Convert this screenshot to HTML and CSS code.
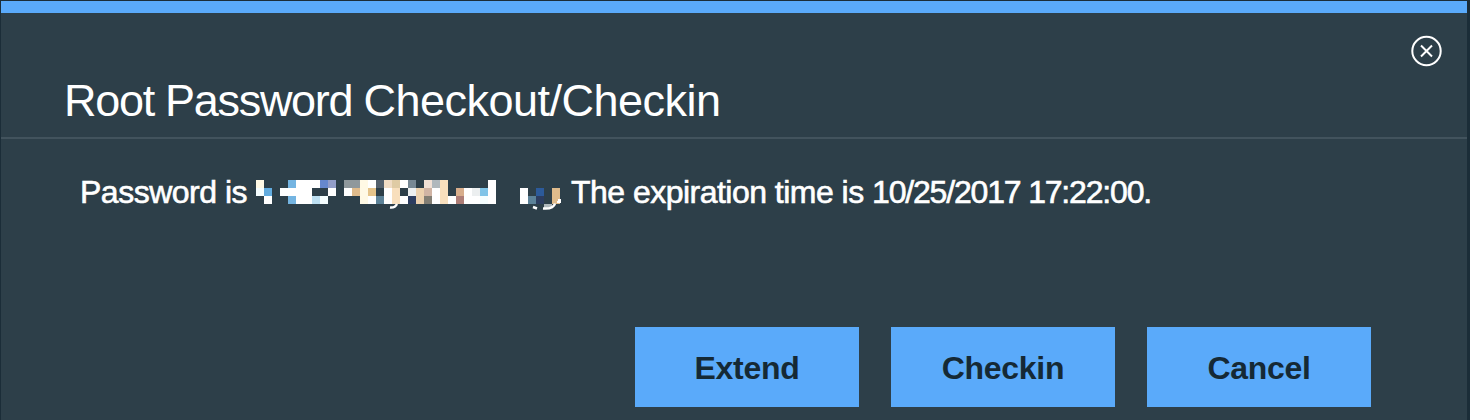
FILE: index.html
```
<!DOCTYPE html>
<html lang="en">
<head>
<meta charset="utf-8">
<title>Root Password Checkout/Checkin</title>
<link rel="stylesheet" href="styles.css">
</head>
<body>
<main class="dialog">
  <header class="header">
    <h1 class="title">Root Password <span class="operation">Checkout/Checkin</span></h1>
    <button class="close" aria-label="Close">
      <svg width="32" height="32" viewBox="0 0 32 32" fill="none" stroke="#fff" stroke-width="2"><circle cx="16.5" cy="16" r="14.2"/><path d="M11 10.500l11 11M22 10.500l-11 11"/></svg>
    </button>
  </header>
  <p class="message">
    <span class="label">Password is</span>
    <svg class="mask" width="308" height="32" viewBox="256 180 308 32" shape-rendering="crispEdges">
      <path fill="#fff" d="M296 180h24v8h-24zM280 188h32v8h-32zM328 188h8v8h-8zM264 196h8v8h-8zM296 196h16v8h-16zM344 188h8v8h-8zM368 180h8v8h-8zM400 180h8v8h-8zM488 180h8v24h-8zM384 188h8v16h-8zM432 188h8v16h-8zM464 188h8v16h-8zM368 196h8v8h-8zM400 196h8v8h-8zM448 196h8v8h-8zM472 196h8v8h-8zM520 188h8v16h-8z"/>
      <path fill="#fff9e5" d="M256 180h8v8h-8zM360 180h8v24h-8z"/>
      <path fill="#f5feff" d="M256 188h8v8h-8zM320 196h8v8h-8zM480 196h8v8h-8z"/>
      <path fill="#62acdf" d="M264 188h8v8h-8z"/>
      <path fill="#74b4e1" d="M288 180h8v8h-8zM288 196h8v8h-8z"/>
      <path fill="#bde0f2" d="M312 196h8v8h-8z"/>
      <path fill="#6688ce" d="M320 180h8v8h-8z"/>
      <path fill="#929dc8" d="M328 180h8v8h-8z"/>
      <path fill="#8f989c" d="M344 180h16v8h-16z"/>
      <path fill="#dfbb8c" d="M352 188h8v8h-8zM552 188h8v16h-8z"/>
      <path fill="#e5c48b" d="M368 188h8v8h-8z"/>
      <path fill="#53606c" d="M376 180h8v8h-8z"/>
      <path fill="#5c8298" d="M376 196h8v8h-8zM528 196h8v8h-8z"/>
      <path fill="#f0dcc4" d="M384 180h8v8h-8z"/>
      <path fill="#dfcba4" d="M392 180h8v8h-8z"/>
      <path fill="#f8dfbd" d="M392 188h8v16h-8zM440 180h8v24h-8z"/>
      <path fill="#778894" d="M408 180h8v8h-8z"/>
      <path fill="#eceff0" d="M408 188h8v8h-8zM472 188h8v8h-8z"/>
      <path fill="#2c3d60" d="M408 196h8v8h-8zM536 196h8v8h-8z"/>
      <path fill="#ecd1ae" d="M416 188h8v16h-8z"/>
      <path fill="#f0e0d4" d="M424 180h8v8h-8z"/>
      <path fill="#d0b4a4" d="M424 188h8v8h-8z"/>
      <path fill="#827e74" d="M424 196h8v8h-8z"/>
      <path fill="#b0b8bc" d="M432 180h8v8h-8zM544 204h8v4h-8z"/>
      <path fill="#d7ad8b" d="M456 188h8v8h-8z"/>
      <path fill="#ad7d76" d="M456 196h8v8h-8z"/>
      <path fill="#7fc4e8" d="M480 188h8v8h-8z"/>
      <path fill="#2c5a9a" d="M536 188h8v8h-8z"/>
      <g fill="none" stroke="#fff" stroke-width="2.5" shape-rendering="auto"><path d="M390 207.500c4 .5 5.500-.5 7-3.500"/><path d="M533 207l4 1.500M543 208.500c7 .5 11-1 12-5"/></g>
      <path fill="#fff" d="M558 199h3v4h-4z"/>
    </svg>
    <span class="expiry">The expiration time is <time class="stamp">10/25/2017 17:22:00.</time></span>
  </p>
  <footer class="actions">
    <button class="action">Extend</button>
    <button class="action">Checkin</button>
    <button class="action">Cancel</button>
  </footer>
</main>
</body>
</html>
```
FILE: styles.css
```
* { box-sizing: border-box; }
body { margin: 0; background: #1b2d38; font-family: "Liberation Sans", Arial, sans-serif; overflow: hidden; }
button { border: 0; padding: 0; font-family: inherit; }
.dialog { height: 419px; margin: 1px 3px 0 1px; background: #2d3f49; border-top: 12px solid #5aaafa; display: flex; flex-direction: column; }
.header { height: 126px; flex: none; display: flex; justify-content: space-between; align-items: flex-start; padding: 22px 25px 0 63px; border-bottom: 2px solid #42535d; }
.title { margin: 40px 0 0; font-size: 45px; line-height: 52px; font-weight: 400; letter-spacing: -1.3px; color: #fff; white-space: nowrap; }
.operation { letter-spacing: -.5px; }
.close { width: 32px; height: 32px; background: none; }
.close svg { display: block; }
.message { margin: 0; height: 188px; flex: none; display: flex; align-items: flex-start; padding: 33px 0 0 79px; color: #fff; font-size: 32px; line-height: 40px; white-space: nowrap; }
.label { width: 176px; letter-spacing: -.5px; -webkit-text-stroke: .6px #fff; }
.mask { flex: none; margin: 8px 7px 0 0; }
.expiry { letter-spacing: -.52px; -webkit-text-stroke: .6px #fff; }
.stamp { letter-spacing: -1.18px; }
.actions { display: flex; justify-content: flex-end; gap: 32px; padding-right: 96px; }
.action { width: 224px; height: 80px; padding: 2px 0 0; background: #5aaafa; color: #152935; font-size: 32px; font-weight: 700; letter-spacing: -.3px; }
```
